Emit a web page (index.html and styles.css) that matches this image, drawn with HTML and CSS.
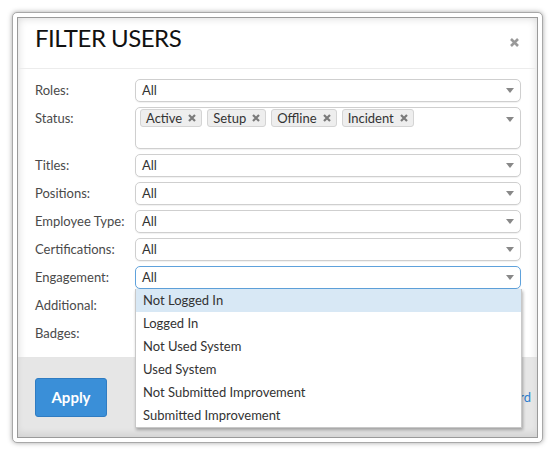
FILE: index.html
```html
<!DOCTYPE html>
<html>
<head>
<meta charset="utf-8">
<link rel="stylesheet" href="styles.css">
</head>
<body>
<div class="frame">
  <div class="modal">
    <div class="header">
      <h1 class="title">FILTER USERS</h1>
      <svg class="close" width="9" height="9" viewBox="0 0 9 9"><path d="M1 1L8 8M8 1L1 8" stroke="#999" stroke-width="2.6"/></svg>
    </div>
    <div class="body">
      <div class="row"><div class="label">Roles:</div><div class="select"><span class="value">All</span><span class="arrow"></span></div></div>
      <div class="row"><div class="label">Status:</div>
        <div class="select multi">
          <div class="tags">
            <span class="tag">Active <svg class="x" width="8" height="8" viewBox="0 0 8 8"><path d="M1 1L7 7M7 1L1 7" stroke="#7a7a7a" stroke-width="2.2"/></svg></span>
            <span class="tag">Setup <svg class="x" width="8" height="8" viewBox="0 0 8 8"><path d="M1 1L7 7M7 1L1 7" stroke="#7a7a7a" stroke-width="2.2"/></svg></span>
            <span class="tag">Offline <svg class="x" width="8" height="8" viewBox="0 0 8 8"><path d="M1 1L7 7M7 1L1 7" stroke="#7a7a7a" stroke-width="2.2"/></svg></span>
            <span class="tag">Incident <svg class="x" width="8" height="8" viewBox="0 0 8 8"><path d="M1 1L7 7M7 1L1 7" stroke="#7a7a7a" stroke-width="2.2"/></svg></span>
          </div>
          <span class="arrow"></span>
        </div>
      </div>
      <div class="row"><div class="label">Titles:</div><div class="select"><span class="value">All</span><span class="arrow"></span></div></div>
      <div class="row"><div class="label">Positions:</div><div class="select"><span class="value">All</span><span class="arrow"></span></div></div>
      <div class="row"><div class="label">Employee Type:</div><div class="select"><span class="value">All</span><span class="arrow"></span></div></div>
      <div class="row"><div class="label">Certifications:</div><div class="select"><span class="value">All</span><span class="arrow"></span></div></div>
      <div class="row"><div class="label">Engagement:</div>
        <div class="select focused"><span class="value">All</span><span class="arrow"></span>
          <ul class="dropdown">
            <li class="active">Not Logged In</li>
            <li>Logged In</li>
            <li>Not Used System</li>
            <li>Used System</li>
            <li>Not Submitted Improvement</li>
            <li>Submitted Improvement</li>
          </ul>
        </div>
      </div>
      <div class="row"><div class="label">Additional:</div><div class="select"><span class="value"></span><span class="arrow"></span></div></div>
      <div class="row"><div class="label">Badges:</div><div class="select"><span class="value"></span><span class="arrow"></span></div></div>
    </div>
    <div class="footer">
      <button class="apply">Apply</button>
      <a class="link">Reset to Standard</a>
    </div>
  </div>
</div>
</body>
</html>
```
FILE: styles.css
```css
* { box-sizing: border-box; }
html, body { margin: 0; padding: 0; background: #fff; }
body { font-family: Lato, "Open Sans", sans-serif; font-size: 13px; color: #444; }

.frame {
  margin: 12px;
  width: 531px;
  height: 431px;
  border: 1px solid #a8a8a8;
  border-radius: 5px;
  padding: 4px;
  background: #fff;
  box-shadow: 0 0 5px rgba(0,0,0,0.35);
}
.modal {
  position: relative;
  height: 421px;
  border: 1px solid #9a9a9a;
  background: #fff;
  display: flex;
  flex-direction: column;
  box-shadow: inset 0 0 9px rgba(0,0,0,0.16);
}
.header {
  display: flex;
  align-items: center;
  justify-content: space-between;
  padding: 5px 18px 15px 17px;
  border-bottom: 1px solid #ececec;
}
.title {
  margin: 0;
  font-family: Lato, sans-serif;
  font-weight: 400;
  font-size: 24px;
  line-height: 30px;
  color: #111;
  letter-spacing: -0.5px;
}
.close { margin-top: 8px; }

.body {
  padding: 10px 16px 12px 17px;
  display: flex;
  flex-direction: column;
  gap: 5px;
  flex: 1;
}
.row { display: flex; align-items: flex-start; }
.label {
  width: 100px;
  flex: none;
  line-height: 23px;
  color: #4a4a4a;
}
.select {
  position: relative;
  flex: 1;
  height: 23px;
  border: 1px solid #cfcfcf;
  border-radius: 5px;
  background: #fff;
  display: flex;
  align-items: center;
  padding: 0 6px;
  box-shadow: 0 1px 1px rgba(0,0,0,0.06);
}
.select .value { flex: 1; color: #333; line-height: 21px; }
.arrow {
  width: 0; height: 0;
  border-left: 4px solid transparent;
  border-right: 4px solid transparent;
  border-top: 5px solid #888;
}
.select.multi {
  height: 42px;
  align-items: flex-start;
  padding: 1px 6px 0 4px;
}
.select.multi .arrow { margin-top: 8px; }
.tags { flex: 1; display: flex; gap: 5px; }
.tag {
  display: inline-flex;
  align-items: center;
  height: 18px;
  padding: 0 5px;
  background: #eeeeee;
  border: 1px solid #d4d4d4;
  border-radius: 3px;
  color: #333;
  line-height: 16px;
}
.tag .x { margin-left: 6px; }
.select.focused { border-color: #5fa2dc; }

.dropdown {
  position: absolute;
  top: 22px;
  left: -1px;
  right: -2px;
  margin: 0;
  padding: 0;
  list-style: none;
  background: #fff;
  border: 1px solid #c8c8c8;
  border-top: none;
  box-shadow: 1px 2px 3px rgba(0,0,0,0.3);
  z-index: 5;
}
.dropdown li {
  height: 23px;
  line-height: 23px;
  padding-left: 7px;
  color: #333;
}
.dropdown li.active { background: #d8e8f5; }

.footer {
  height: 80px;
  flex: none;
  background: #e6e6e6;
  display: flex;
  align-items: center;
  justify-content: space-between;
  padding: 0 6px 0 17px;
  box-shadow: inset 0 -4px 6px rgba(0,0,0,0.08);
}
.apply {
  width: 72px;
  height: 39px;
  background: #3a8fd8;
  border: 1px solid #2f7cc2;
  border-radius: 3px;
  color: #fff;
  font-family: Lato, sans-serif;
  font-weight: 700;
  font-size: 15px;
  padding: 0;
}
.link { color: #2f80cf; font-size: 13px; }
```
